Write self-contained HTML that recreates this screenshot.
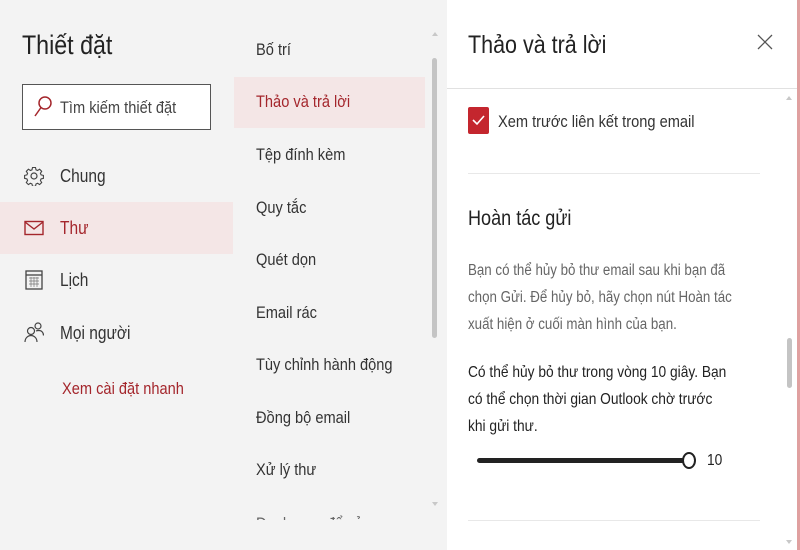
<!DOCTYPE html>
<html><head><meta charset="utf-8"><style>
body{margin:0;width:800px;height:550px;overflow:hidden;background:#f3f3f3;font-family:"Liberation Sans","Noto Sans CJK SC",sans-serif;position:relative;color:#333}
.t{position:absolute;white-space:nowrap;transform:scaleX(.86);transform-origin:left center;line-height:20px}
.ab{position:absolute}
</style></head><body>
<div class="t" style="left:22px;top:30px;font-size:27px;line-height:30px;color:#222">Thiết đặt</div>
<div class="ab" style="left:22px;top:84px;width:189px;height:46px;border:1px solid #555;background:#fff;box-sizing:border-box"></div>
<svg class="ab" style="left:33px;top:95px" width="20" height="24" viewBox="0 0 20 24"><circle cx="12" cy="8" r="6" fill="none" stroke="#a4262c" stroke-width="1.5"/><line x1="8" y1="12.5" x2="2" y2="21" stroke="#a4262c" stroke-width="1.5"/></svg>
<div class="t" style="left:60px;top:98px;font-size:17px;color:#444">Tìm kiếm thiết đặt</div>

<svg class="ab" style="left:24px;top:166px" width="20" height="20" viewBox="0 0 20 20"><circle cx="10" cy="10" r="3" fill="none" stroke="#444" stroke-width="1.2"/><path d="M8.5 1.5h3l.5 2.3 1.6.7 2-1.3 2.1 2.1-1.3 2 .7 1.6 2.3.5v3l-2.3.5-.7 1.6 1.3 2-2.1 2.1-2-1.3-1.6.7-.5 2.3h-3l-.5-2.3-1.6-.7-2 1.3-2.1-2.1 1.3-2-.7-1.6-2.3-.5v-3l2.3-.5.7-1.6-1.3-2 2.1-2.1 2 1.3 1.6-.7z" fill="none" stroke="#444" stroke-width="1.1"/></svg>
<div class="t" style="left:60px;top:166px;font-size:18px;color:#333">Chung</div>
<div class="ab" style="left:0;top:202px;width:233px;height:52px;background:#f4e6e6"></div>
<svg class="ab" style="left:24px;top:220px" width="20" height="16" viewBox="0 0 20 16"><rect x="1" y="1.5" width="18" height="13" fill="none" stroke="#a4262c" stroke-width="1.4"/><path d="M1 2 L10 9 L19 2" fill="none" stroke="#a4262c" stroke-width="1.4"/></svg>
<div class="t" style="left:60px;top:218px;font-size:18px;color:#a4262c">Thư</div>
<svg class="ab" style="left:25px;top:270px" width="18" height="20" viewBox="0 0 18 20"><rect x="1" y="1" width="16" height="18" fill="none" stroke="#444" stroke-width="1.3"/><line x1="1" y1="5" x2="17" y2="5" stroke="#444" stroke-width="1.3"/><path d="M4 8h10M4 11h10M4 14h10M6 7v10M9 7v10M12 7v10" stroke="#777" stroke-width=".7"/></svg>
<div class="t" style="left:60px;top:270px;font-size:18px;color:#333">Lịch</div>
<svg class="ab" style="left:24px;top:321px" width="20" height="22" viewBox="0 0 20 22"><circle cx="7" cy="10" r="3.5" fill="none" stroke="#444" stroke-width="1.2"/><path d="M1 21c0-4 3-6.5 6-6.5s6 2.5 6 6.5" fill="none" stroke="#444" stroke-width="1.2"/><circle cx="14" cy="5" r="3" fill="none" stroke="#444" stroke-width="1.2"/><path d="M12 10c1-.5 2-.5 3-.5 2.5 0 4.5 2 4.5 5" fill="none" stroke="#444" stroke-width="1.2"/></svg>
<div class="t" style="left:60px;top:323px;font-size:18px;color:#333">Mọi người</div>
<div class="t" style="left:62px;top:379px;font-size:17px;color:#a4262c">Xem cài đặt nhanh</div>

<div class="ab" style="left:234px;top:77px;width:191px;height:51px;background:#f4e6e6"></div>
<div class="t" style="left:256px;top:40px;font-size:17px">Bố trí</div>
<div class="t" style="left:256px;top:92px;font-size:17px;color:#a4262c">Thảo và trả lời</div>
<div class="t" style="left:256px;top:145px;font-size:17px">Tệp đính kèm</div>
<div class="t" style="left:256px;top:198px;font-size:17px">Quy tắc</div>
<div class="t" style="left:256px;top:250px;font-size:17px">Quét dọn</div>
<div class="t" style="left:256px;top:303px;font-size:17px">Email rác</div>
<div class="t" style="left:256px;top:355px;font-size:17px">Tùy chỉnh hành động</div>
<div class="t" style="left:256px;top:408px;font-size:17px">Đồng bộ email</div>
<div class="t" style="left:256px;top:460px;font-size:17px">Xử lý thư</div>
<div class="ab" style="left:250px;top:512px;width:180px;height:38px;background:#f3f3f3"></div>
<div class="ab" style="left:256px;top:514px;width:160px;height:6px;overflow:hidden"><div class="t" style="left:0;top:0;font-size:17px;color:#666">Danh mục để xử</div></div>
<div class="ab" style="left:432px;top:32px;width:0;height:0;border:3px solid transparent;border-bottom:4px solid #c8c8c8;border-top:0"></div>
<div class="ab" style="left:432px;top:58px;width:5px;height:280px;background:#c4c4c4;border-radius:3px"></div>
<div class="ab" style="left:432px;top:502px;width:0;height:0;border:3px solid transparent;border-top:4px solid #c8c8c8;border-bottom:0"></div>

<div class="ab" style="left:447px;top:0;width:353px;height:550px;background:#fff"></div>
<div class="ab" style="left:797px;top:0;width:3px;height:550px;background:#e0a0a0"></div>
<div class="t" style="left:468px;top:30px;font-size:25px;line-height:30px;color:#222">Thảo và trả lời</div>
<svg class="ab" style="left:757px;top:34px" width="16" height="16" viewBox="0 0 16 16"><path d="M1 1L15 15M15 1L1 15" stroke="#555" stroke-width="1.3"/></svg>
<div class="ab" style="left:447px;top:88px;width:350px;height:1px;background:#e1e1e1"></div>
<div class="ab" style="left:468px;top:107px;width:21px;height:27px;background:#c4262e;border-radius:2px"></div>
<svg class="ab" style="left:471px;top:113px" width="15" height="14" viewBox="0 0 15 14"><path d="M2 7L6 11L13 3" fill="none" stroke="#fff" stroke-width="1.6"/></svg>
<div class="t" style="left:498px;top:112px;font-size:17px;color:#333">Xem trước liên kết trong email</div>
<div class="ab" style="left:468px;top:173px;width:292px;height:1px;background:#e8e8e8"></div>
<div class="t" style="left:468px;top:207px;font-size:21px;line-height:24px;color:#222">Hoàn tác gửi</div>
<div class="t" style="left:468px;top:261px;font-size:15.5px;color:#666">Bạn có thể hủy bỏ thư email sau khi bạn đã</div>
<div class="t" style="left:468px;top:288px;font-size:15.5px;color:#666">chọn Gửi. Để hủy bỏ, hãy chọn nút Hoàn tác</div>
<div class="t" style="left:468px;top:315px;font-size:15.5px;color:#666">xuất hiện ở cuối màn hình của bạn.</div>
<div class="t" style="left:468px;top:363px;font-size:16px;color:#222">Có thể hủy bỏ thư trong vòng 10 giây. Bạn</div>
<div class="t" style="left:468px;top:390px;font-size:16px;color:#222">có thể chọn thời gian Outlook chờ trước</div>
<div class="t" style="left:468px;top:417px;font-size:16px;color:#222">khi gửi thư.</div>
<div class="ab" style="left:477px;top:458px;width:208px;height:5px;background:#222;border-radius:3px"></div>
<div class="ab" style="left:682px;top:452px;width:14px;height:17px;border:2px solid #222;border-radius:50%;background:#fff;box-sizing:border-box"></div>
<div class="t" style="left:707px;top:451px;font-size:16px;color:#222">10</div>
<div class="ab" style="left:468px;top:520px;width:292px;height:1px;background:#e8e8e8"></div>
<div class="ab" style="left:786px;top:96px;width:0;height:0;border:3px solid transparent;border-bottom:4px solid #c8c8c8;border-top:0"></div>
<div class="ab" style="left:787px;top:338px;width:5px;height:50px;background:#c4c4c4;border-radius:3px"></div>
<div class="ab" style="left:786px;top:540px;width:0;height:0;border:3px solid transparent;border-top:4px solid #c8c8c8;border-bottom:0"></div>
</body></html>
